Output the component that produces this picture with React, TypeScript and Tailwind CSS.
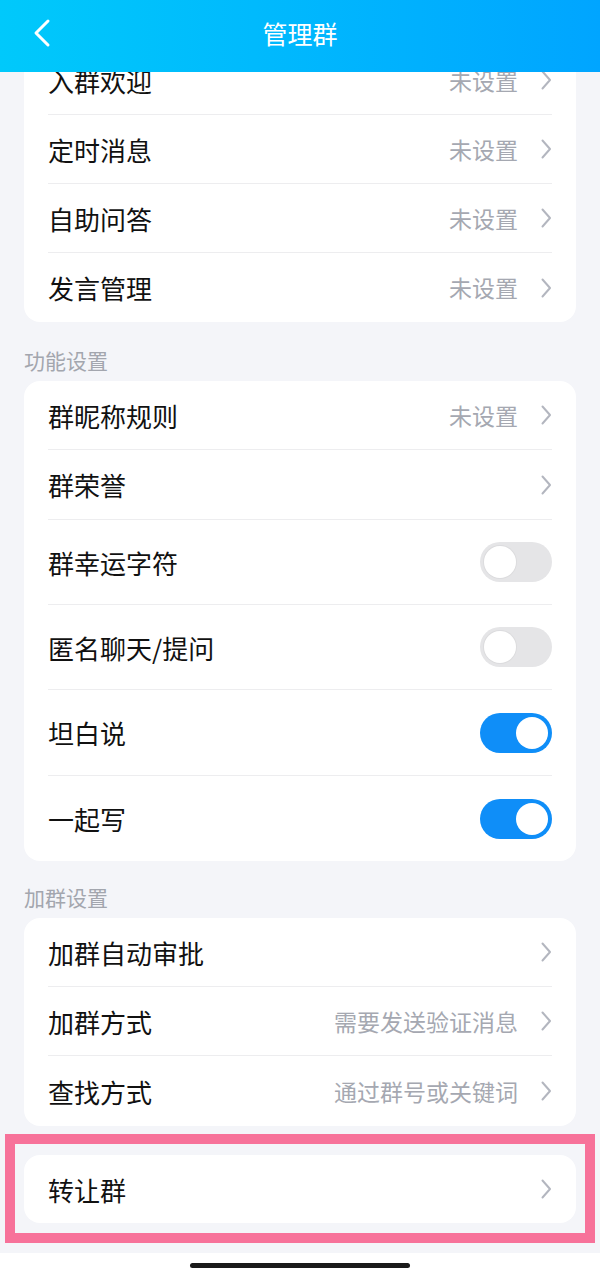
import React from 'react';

type Row = {
  label: string;
  value?: string;
  arrow?: boolean;
  toggle?: boolean;
  on?: boolean;
  h: string;
};

const Chevron = () => (
  <svg width="12" height="20" viewBox="0 0 12 20" className="shrink-0">
    <path d="M2.5 1.5 L10 10 L2.5 18.5" fill="none" stroke="#b3b6bf" strokeWidth="2" strokeLinecap="round" strokeLinejoin="round" />
  </svg>
);

const Toggle = ({ on }: { on?: boolean }) => (
  <div className={`w-[72px] h-[40px] rounded-full flex items-center px-[4px] ${on ? 'bg-[#0f8ef8] justify-end' : 'bg-[#e5e5e7] justify-start'}`}>
    <div className={`w-[32px] h-[32px] rounded-full bg-white ${on ? '' : 'shadow-[0_0_0_1px_#dcdcde]'}`} />
  </div>
);

const Card = ({ rows }: { rows: Row[] }) => (
  <div className="bg-white rounded-2xl">
    {rows.map((r, i) => (
      <div
        key={r.label}
        className={`mx-6 flex items-center justify-between ${r.h} ${i < rows.length - 1 ? 'border-b border-[#ededef]' : ''}`}
      >
        <span className="text-[26px] text-[#111111]">{r.label}</span>
        {r.toggle ? (
          <Toggle on={r.on} />
        ) : (
          <div className="flex items-center gap-[22px]">
            {r.value && <span className="text-[23px] text-[#a5a8b1]">{r.value}</span>}
            <Chevron />
          </div>
        )}
      </div>
    ))}
  </div>
);

const SectionTitle = ({ text, pt }: { text: string; pt: string }) => (
  <div className={`${pt} pb-[8px] text-[21px] leading-[26px] text-[#a3a6ae]`}>{text}</div>
);

export default function App() {
  return (
    <div
      className="relative w-[600px] h-[1278px] overflow-hidden bg-[#f4f5f9]"
      style={{ fontFamily: '"Noto Sans CJK SC", "Noto Sans", sans-serif' }}
    >
      {/* Header */}
      <header className="absolute top-0 left-0 right-0 h-[72px] z-10 bg-gradient-to-r from-[#00c9fb] to-[#00a5ff] flex items-center justify-center pb-[5px]">
        <svg width="20" height="30" viewBox="0 0 20 30" className="absolute left-[32px] top-[18px]">
          <path d="M16 3 L4 15 L16 27" fill="none" stroke="white" strokeWidth="3" strokeLinecap="round" strokeLinejoin="round" />
        </svg>
        <h1 className="text-[25px] text-white">管理群</h1>
      </header>

      <div className="px-6 pt-[46px]">
        <Card
          rows={[
            { label: '入群欢迎', value: '未设置', h: 'h-[69px]' },
            { label: '定时消息', value: '未设置', h: 'h-[69px]' },
            { label: '自助问答', value: '未设置', h: 'h-[69px]' },
            { label: '发言管理', value: '未设置', h: 'h-[69px]' },
          ]}
        />

        <SectionTitle text="功能设置" pt="pt-[25px]" />
        <Card
          rows={[
            { label: '群昵称规则', value: '未设置', h: 'h-[69px]' },
            { label: '群荣誉', h: 'h-[70px]' },
            { label: '群幸运字符', toggle: true, h: 'h-[85px]' },
            { label: '匿名聊天/提问', toggle: true, h: 'h-[85px]' },
            { label: '坦白说', toggle: true, on: true, h: 'h-[86px]' },
            { label: '一起写', toggle: true, on: true, h: 'h-[85px]' },
          ]}
        />

        <SectionTitle text="加群设置" pt="pt-[23px]" />
        <Card
          rows={[
            { label: '加群自动审批', h: 'h-[69px]' },
            { label: '加群方式', value: '需要发送验证消息', h: 'h-[69px]' },
            { label: '查找方式', value: '通过群号或关键词', h: 'h-[70px]' },
          ]}
        />

        {/* highlighted transfer row */}
        <div className="mt-[8px] -mx-[19px] border-[10px] border-[#f7729a] px-[9px] pt-[11px] pb-[10px]">
          <Card rows={[{ label: '转让群', h: 'h-[68px]' }]} />
        </div>
      </div>

      {/* home indicator */}
      <div className="mt-[10px] h-[25px] bg-white flex justify-center pt-[10px]">
        <div className="w-[220px] h-[5px] rounded-full bg-[#1a1a1a]" />
      </div>
    </div>
  );
}
